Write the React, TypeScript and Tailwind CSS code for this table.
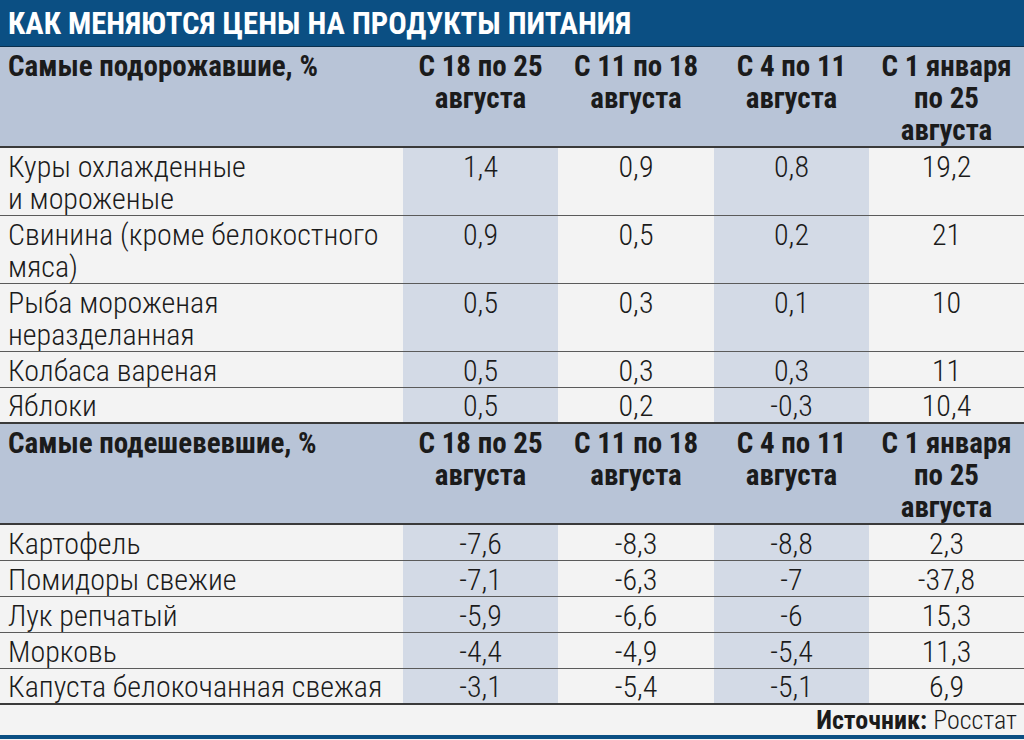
type Row = { name: string[]; values: string[] }

const up: Row[] = [
  { name: ['Куры охлажденные', 'и мороженые'], values: ['1,4', '0,9', '0,8', '19,2'] },
  { name: ['Свинина (кроме белокостного', 'мяса)'], values: ['0,9', '0,5', '0,2', '21'] },
  { name: ['Рыба мороженая', 'неразделанная'], values: ['0,5', '0,3', '0,1', '10'] },
  { name: ['Колбаса вареная'], values: ['0,5', '0,3', '0,3', '11'] },
  { name: ['Яблоки'], values: ['0,5', '0,2', '-0,3', '10,4'] },
]

const down: Row[] = [
  { name: ['Картофель'], values: ['-7,6', '-8,3', '-8,8', '2,3'] },
  { name: ['Помидоры свежие'], values: ['-7,1', '-6,3', '-7', '-37,8'] },
  { name: ['Лук репчатый'], values: ['-5,9', '-6,6', '-6', '15,3'] },
  { name: ['Морковь'], values: ['-4,4', '-4,9', '-5,4', '11,3'] },
  { name: ['Капуста белокочанная свежая'], values: ['-3,1', '-5,4', '-5,1', '6,9'] },
]

const periods = [
  ['С 18 по 25', 'августа'],
  ['С 11 по 18', 'августа'],
  ['С 4 по 11', 'августа'],
  ['С 1 января', 'по 25', 'августа'],
]

const cols = 'grid grid-cols-[403px_155px_156px_155px_155px]'

function HeaderRow({ title }: { title: string }) {
  return (
    <div className={`${cols} bg-[#b8c4d7] border-b-2 border-[#3a3a3a] font-bold text-[29px] leading-[32px] text-[#1b1b1b]`}>
      <div className="h-[99px] pl-2 pt-[3px]">{title}</div>
      {periods.map((p, i) => (
        <div key={i} className="pt-[3px] text-center">
          {p.map((line) => (
            <div key={line}>{line}</div>
          ))}
        </div>
      ))}
    </div>
  )
}

function DataRow({ row, last }: { row: Row; last: boolean }) {
  // last row of a block has a heavier rule, so it gets 1px less padding on top
  const pad = last ? 'pt-[2px]' : 'pt-[3px]'
  return (
    <div
      className={`${cols} text-[30px] leading-[32px] font-light text-[#1b1b1b] ${
        last ? 'border-b-2 border-[#3a3a3a]' : 'border-b border-[#5a5a5a]'
      }`}
    >
      <div className={`bg-[#f3f3f3] pl-2 ${pad}`}>
        {row.name.map((line) => (
          <div key={line}>{line}</div>
        ))}
      </div>
      {row.values.map((v, i) => (
        <div key={i} className={`${pad} text-center ${i % 2 === 0 ? 'bg-[#d3dae6]' : 'bg-[#f3f3f3]'}`}>
          {v}
        </div>
      ))}
    </div>
  )
}

export default function App() {
  return (
    <div className="w-[1024px] h-[740px] overflow-hidden bg-[#f3f3f3] font-['Roboto_Condensed','Liberation_Sans',sans-serif]">
      {/* Title */}
      <div className="h-[47px] bg-[#0b4f83] border-b border-[#0a2f4d] pl-2 pt-[5px] text-[30.7px] leading-[38px] font-bold text-white">
        КАК МЕНЯЮТСЯ ЦЕНЫ НА ПРОДУКТЫ ПИТАНИЯ
      </div>

      <HeaderRow title="Самые подорожавшие, %" />
      {up.map((r, i) => (
        <DataRow key={r.name[0]} row={r} last={i === up.length - 1} />
      ))}

      <HeaderRow title="Самые подешевевшие, %" />
      {down.map((r, i) => (
        <DataRow key={r.name[0]} row={r} last={i === down.length - 1} />
      ))}

      {/* Source */}
      <div className="h-[30px] flex items-center justify-end pr-[7px] text-[26px] text-[#1b1b1b] font-light">
        <span className="font-bold mr-[6px]">Источник:</span>
        <span>Росстат</span>
      </div>
      <div className="h-[4px] bg-[#0b4f83]" />
    </div>
  )
}
